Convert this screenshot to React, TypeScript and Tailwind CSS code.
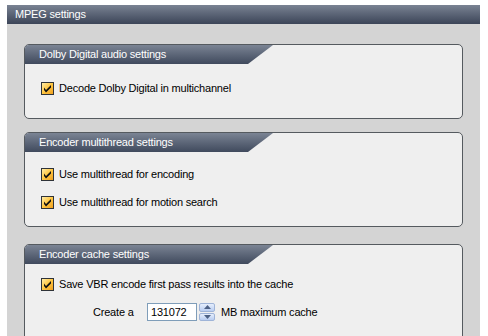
const font = { fontFamily: '"Liberation Sans", Arial, sans-serif' };

const Check = () => (
  <svg width="13" height="13" viewBox="0 0 13 13" className="shrink-0">
    <defs>
      <linearGradient id="cbfill" x1="0" y1="0" x2="1" y2="1">
        <stop offset="0" stopColor="#fff0b0" />
        <stop offset="0.5" stopColor="#ffc641" />
        <stop offset="1" stopColor="#ee9c1c" />
      </linearGradient>
    </defs>
    <rect x="0.5" y="0.5" width="12" height="12" fill="url(#cbfill)" stroke="#2f3338" />
    <path d="M3 5.5 L5 8 L10 3 L10 5.5 L5 10.5 L3 8 Z" fill="#111" />
  </svg>
);

const Row = ({ children }: { children: React.ReactNode }) => (
  <div className="h-[28px] flex items-center pl-[16px] gap-[5px] text-[11px] tracking-[-0.2px] text-black">
    {children}
  </div>
);

const Panel = ({
  title,
  className,
  children,
}: {
  title: string;
  className: string;
  children: React.ReactNode;
}) => (
  <div className="border border-[#555a5f] rounded-[5px] bg-[#efefef] overflow-hidden">
    <div className="h-[19px] flex">
      <div
        className="w-[248px] h-full bg-gradient-to-b from-[#7b8494] to-[#404a5d] text-white text-[11px] tracking-[-0.2px] flex items-center pl-[14px]"
        style={{ clipPath: "polygon(0 0, 248px 0, 223px 100%, 0 100%)" }}
      >
        {title}
      </div>
    </div>
    <div className={className}>{children}</div>
  </div>
);

export default function App() {
  return (
    <div className="w-[488px] h-[336px] bg-white overflow-hidden" style={font}>
      <div className="ml-[7px] mt-[5px] w-[473px] h-[331px] flex flex-col">
        {/* title bar */}
        <div className="h-[19px] shrink-0 bg-gradient-to-b from-[#7a8393] to-[#3c4558] text-white text-[11px] tracking-[-0.2px] flex items-center pl-[8px]">
          MPEG settings
        </div>
        {/* content */}
        <div className="flex-1 bg-[#d4d4d4] px-[17px] pt-[20px]">
          <Panel title="Dolby Digital audio settings" className="pt-[10px] pb-[16px]">
            <Row>
              <Check />
              <span>Decode Dolby Digital in multichannel</span>
            </Row>
          </Panel>
          <div className="mt-[13px]">
            <Panel title="Encoder multithread settings" className="pt-[8px] pb-[10px]">
              <Row>
                <Check />
                <span>Use multithread for encoding</span>
              </Row>
              <Row>
                <Check />
                <span>Use multithread for motion search</span>
              </Row>
            </Panel>
          </div>
          <div className="mt-[17px]">
            <Panel title="Encoder cache settings" className="pt-[6px] pb-[20px]">
              <Row>
                <Check />
                <span>Save VBR encode first pass results into the cache</span>
              </Row>
              <div className="h-[28px] flex items-center text-[11px] tracking-[-0.2px] text-black pl-[68px]">
                <span className="w-[54px]">Create a</span>
                <div className="w-[50px] h-[18px] bg-white border border-[#7f9db9] flex items-center pl-[3px]">
                  131072
                </div>
                <div className="ml-[2px] w-[16px] h-[18px] flex flex-col gap-px">
                  <div className="flex-1 rounded-[2px] border border-[#9fb4d8] bg-gradient-to-b from-[#e6eefc] to-[#b9cdf1] flex items-center justify-center">
                    <svg width="7" height="4" viewBox="0 0 7 4">
                      <path d="M0 4 L3.5 0 L7 4 Z" fill="#4d6185" />
                    </svg>
                  </div>
                  <div className="flex-1 rounded-[2px] border border-[#9fb4d8] bg-gradient-to-b from-[#e6eefc] to-[#b9cdf1] flex items-center justify-center">
                    <svg width="7" height="4" viewBox="0 0 7 4">
                      <path d="M0 0 L3.5 4 L7 0 Z" fill="#4d6185" />
                    </svg>
                  </div>
                </div>
                <span className="ml-[6px]">MB maximum cache</span>
              </div>
            </Panel>
          </div>
        </div>
      </div>
    </div>
  );
}
